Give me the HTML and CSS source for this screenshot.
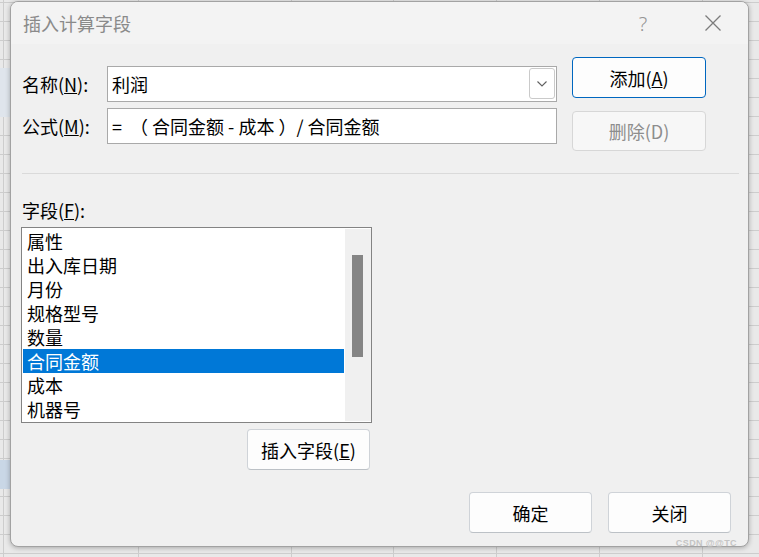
FILE: index.html
```html
<!DOCTYPE html>
<html lang="zh-CN">
<head>
<meta charset="utf-8">
<title>插入计算字段</title>
<link rel="stylesheet" href="styles.css">
</head>
<body>
<div class="dialog">
  <div class="titlebar">
    <span class="title">插入计算字段</span>
    <span class="tb-help">?</span>
    <span class="tb-close"><svg width="16" height="16" viewBox="0 0 16 16"><path d="M0.5 0.5L15.5 15.5M15.5 0.5L0.5 15.5" stroke="#7c7c7c" stroke-width="1.3" fill="none"/></svg></span>
  </div>
  <div class="body">
    <div class="top">
      <div class="form">
        <label class="lbl">名称(<u>N</u>):</label>
        <div class="input combo"><span class="val">利润</span><span class="drop"><svg width="10" height="6" viewBox="0 0 10 6"><path d="M0.5 0.5L5 5L9.5 0.5" stroke="#606060" stroke-width="1.1" fill="none"/></svg></span></div>
        <label class="lbl">公式(<u>M</u>):</label>
        <div class="input"><span class="val">=  （ 合同金额 - 成本 ）/ 合同金额</span></div>
      </div>
      <div class="side">
        <button class="btn side-btn primary">添加(<u>A</u>)</button>
        <button class="btn side-btn disabled">删除(D)</button>
      </div>
    </div>
    <div class="sep"></div>
    <div class="fields-label">字段(<u>F</u>):</div>
    <div class="fields-col">
      <div class="listbox">
        <ul class="items">
          <li>属性</li>
          <li>出入库日期</li>
          <li>月份</li>
          <li>规格型号</li>
          <li>数量</li>
          <li class="sel">合同金额</li>
          <li>成本</li>
          <li>机器号</li>
        </ul>
        <div class="scroll"><div class="thumb"></div></div>
      </div>
      <button class="btn insert">插入字段(<u>E</u>)</button>
    </div>
    <div class="footer">
      <button class="btn foot-btn">确定</button>
      <button class="btn foot-btn">关闭</button>
    </div>
  </div>
  <div class="watermark">CSDN @@TC</div>
</div>
</body>
</html>
```

FILE: styles.css
```css
html, body {
  margin: 0;
  padding: 0;
}
body {
  width: 759px;
  height: 557px;
  overflow: hidden;
  font-family: "Noto Sans CJK SC", "Noto Sans", sans-serif;
  background-color: #e9e9e9;
  background-image:
    linear-gradient(#c9d7e6, #c9d7e6),
    linear-gradient(#dfe5ec, #dfe5ec),
    linear-gradient(90deg, transparent 3px, #cdcdcd 3px, #cdcdcd 4px, transparent 4px,
      transparent 138px, #cdcdcd 138px, #cdcdcd 139px, transparent 139px,
      transparent 291px, #cdcdcd 291px, #cdcdcd 292px, transparent 292px,
      transparent 393px, #cdcdcd 393px, #cdcdcd 394px, transparent 394px,
      transparent 496px, #cdcdcd 496px, #cdcdcd 497px, transparent 497px,
      transparent 599px, #cdcdcd 599px, #cdcdcd 600px, transparent 600px,
      transparent 702px, #cdcdcd 702px, #cdcdcd 703px, transparent 703px),
    linear-gradient(#cdcdcd 1px, transparent 1px);
  background-size: 10px 29px, 10px 49px, 100% 100%, 100% 19px;
  background-position: 0 460px, 0 68px, 0 0, 0 2px;
  background-repeat: no-repeat, no-repeat, no-repeat, repeat;
}

.dialog {
  position: relative;
  box-sizing: border-box;
  width: 739px;
  height: 546px;
  margin: 1px 0 0 10px;
  border: 1px solid #a2a2a2;
  border-radius: 8px;
  background: #f0f0f0;
  box-shadow: 0 1px 5px rgba(0, 0, 0, 0.28);
}

.titlebar {
  height: 42px;
  display: flex;
  align-items: center;
  background: #f3f3f3;
  border-radius: 7px 7px 0 0;
  padding: 0 20px 0 12px;
}
.title {
  flex: 1;
  font-size: 18px;
  color: #8a8a8a;
}
.tb-help {
  width: 30px;
  text-align: center;
  font-size: 20px;
  color: #959595;
  margin-right: 40px;
  font-family: "Noto Sans", sans-serif;
  font-weight: 300;
}
.tb-close {
  width: 30px;
  display: flex;
  justify-content: center;
}

.body {
  padding: 0 17px 0 10px;
}
.top {
  display: flex;
  align-items: flex-start;
  padding-top: 13px;
  height: 94px;
}
.form {
  display: grid;
  grid-template-columns: 86px 450px;
  row-gap: 6px;
  align-items: center;
  margin-top: 9px;
}
.lbl {
  padding-left: 1px;
  font-size: 18px;
  line-height: 24px;
  color: #000;
}
.input {
  box-sizing: border-box;
  height: 36px;
  border: 1px solid #a9a9a9;
  background: #fff;
  display: flex;
  align-items: center;
  padding-left: 4px;
  font-size: 18px;
  color: #000;
}
.val {
  line-height: 24px;
  white-space: pre;
}
.drop {
  box-sizing: border-box;
  align-self: flex-start;
  margin: 1px 1px 0 auto;
  width: 26px;
  height: 31px;
  border: 1px solid #cacaca;
  border-radius: 3px;
  background: #fff;
  display: flex;
  align-items: center;
  justify-content: center;
}
.side {
  margin-left: 15px;
  display: flex;
  flex-direction: column;
  gap: 13px;
}

.btn {
  box-sizing: border-box;
  padding: 0;
  border: 1px solid #cfd3d8;
  border-bottom-color: #bcc1c6;
  border-radius: 4px;
  background: #fdfdfd;
  font-family: "Noto Sans CJK SC", "Noto Sans", sans-serif;
  font-size: 18px;
  color: #000;
  line-height: 24px;
}
.side-btn {
  width: 134px;
  height: 41px;
}
.primary {
  border: 1px solid #0067c0;
}
.disabled {
  height: 40px;
  color: #8d8d8d;
  background: #f7f7f7;
  border-color: #d7d7d7;
}

.sep {
  margin: 22px 0 0 1px;
  width: 717px;
  height: 1px;
  background: #dadada;
}
.fields-label {
  margin-top: 24px;
  padding-left: 1px;
  font-size: 18px;
  line-height: 24px;
}
.fields-col {
  width: 351px;
  margin-top: 5px;
  display: flex;
  flex-direction: column;
  align-items: flex-end;
}
.listbox {
  box-sizing: border-box;
  width: 351px;
  height: 196px;
  border: 1px solid #838383;
  background: #fff;
  display: flex;
}
.items {
  list-style: none;
  margin: 0;
  padding: 1px;
  flex: 1;
}
.items li {
  height: 24px;
  line-height: 24px;
  padding-left: 4px;
  font-size: 18px;
  color: #000;
}
.items li.sel {
  background: #0078d7;
  color: #fff;
}
.scroll {
  box-sizing: border-box;
  width: 26px;
  margin: 1px 0;
  background: #f0f0f0;
  padding: 26px 0 0 7px;
}
.thumb {
  width: 11px;
  height: 102px;
  background: #858585;
}
.insert {
  width: 123px;
  height: 41px;
  margin-top: 6px;
  margin-right: 2px;
}
.footer {
  display: flex;
  justify-content: flex-end;
  gap: 16px;
  margin-top: 22px;
}
.foot-btn {
  width: 123px;
  height: 41px;
}
.watermark {
  position: absolute;
  right: 11px;
  bottom: -2px;
  font-family: "Liberation Sans", sans-serif;
  font-size: 9px;
  line-height: 9px;
  font-weight: bold;
  letter-spacing: 0.4px;
  color: #c4c4c4;
}
```
